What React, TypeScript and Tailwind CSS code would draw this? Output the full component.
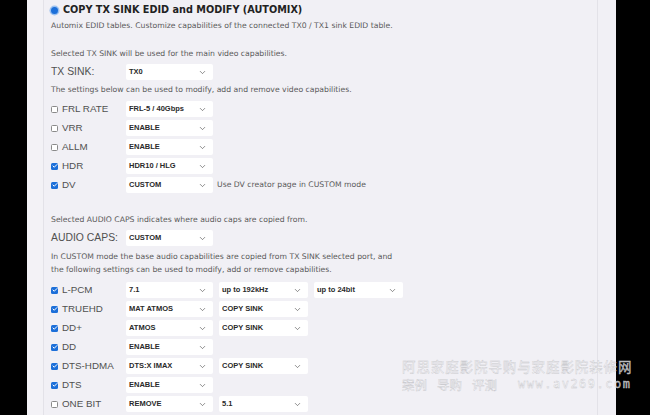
import { ChevronDown, Check } from "lucide-react";

const desc = "text-[7.7px] leading-[12px] text-[#5a5a5a] font-['DejaVu_Sans',sans-serif]";

const Select = ({ value, w = "w-[87px]" }: any) => (
  <div className={`${w} h-[16px] bg-white flex items-center justify-between pl-[3px] pr-[6px] rounded-[2px]`}>
    <span className="text-[7.5px] font-bold text-[#2a2a2a] font-['Liberation_Sans',sans-serif]">{value}</span>
    <ChevronDown size={9} strokeWidth={1.6} className="text-[#444]" />
  </div>
);

const Box = ({ on }: any) =>
  on ? (
    <span className="w-[7px] h-[7px] rounded-[1.5px] bg-[#1c6fd9] flex items-center justify-center">
      <Check size={6} strokeWidth={4} className="text-white" />
    </span>
  ) : (
    <span className="w-[7px] h-[7px] rounded-[1.5px] border border-[#8a8a8a] bg-white" />
  );

const Row = ({ label, on, values, note, big }: any) => (
  <div className="h-[16px] flex items-center">
    <div className="w-[75px] flex items-center gap-[4px]">
      {on !== undefined && <Box on={on} />}
      <span
        className={`${big ? "text-[10.4px]" : "text-[9.8px]"} text-[#505050] font-['Liberation_Sans',sans-serif]`}
      >
        {label}
      </span>
    </div>
    <div className="flex gap-[6px] items-center">
      {values.map((v: string, i: number) => (
        <Select key={i} value={v} w={i === 0 ? "w-[87px]" : "w-[89px]"} />
      ))}
      {note && <span className={`${desc} ml-[-2px]`}>{note}</span>}
    </div>
  </div>
);

export default function App() {
  return (
    <div className="relative w-[650px] h-[415px] overflow-hidden flex bg-black">
      <div className="w-[27px] bg-black" />
      <div className="w-[17px] bg-[#f3f2f6] border-r border-[#e3e2e8]" />
      <div className="w-[553px] bg-[#f1f0f5] pl-[7px] pt-[1px] flex flex-col">
        <div className="h-[19px] flex items-center gap-[5px]">
          <span className="w-[7px] h-[7px] rounded-full bg-[#1c6fd9] ring-[1.5px] ring-[#9cc2f0]" />
          <span className="text-[9.7px] font-bold text-[#222] font-['DejaVu_Sans',sans-serif]">
            COPY TX SINK EDID and MODIFY (AUTOMIX)
          </span>
        </div>
        <p className={desc}>
          Automix EDID tables. Customize capabilities of the connected TX0 / TX1 sink EDID table.
        </p>
        <p className={`${desc} mt-[16px]`}>Selected TX SINK will be used for the main video capabilities.</p>
        <div className="mt-[4px]">
          <Row big label="TX SINK:" values={["TX0"]} />
        </div>
        <p className={`${desc} mt-[4px]`}>The settings below can be used to modify, add and remove video capabilities.</p>
        <div className="mt-[5px] flex flex-col gap-[3px]">
          <Row on={false} label="FRL RATE" values={["FRL-5 / 40Gbps"]} />
          <Row on={false} label="VRR" values={["ENABLE"]} />
          <Row on={false} label="ALLM" values={["ENABLE"]} />
          <Row on={true} label="HDR" values={["HDR10 / HLG"]} />
          <Row on={true} label="DV" values={["CUSTOM"]} note="Use DV creator page in CUSTOM mode" />
        </div>
        <p className={`${desc} mt-[21px]`}>Selected AUDIO CAPS indicates where audio caps are copied from.</p>
        <div className="mt-[4px]">
          <Row big label="AUDIO CAPS:" values={["CUSTOM"]} />
        </div>
        <p className={`${desc} mt-[4px] leading-[13px]`}>
          In CUSTOM mode the base audio capabilities are copied from TX SINK selected port, and
          <br />
          the following settings can be used to modify, add or remove capabilities.
        </p>
        <div className="mt-[6px] flex flex-col gap-[3px]">
          <Row on={true} label="L-PCM" values={["7.1", "up to 192kHz", "up to 24bit"]} />
          <Row on={true} label="TRUEHD" values={["MAT ATMOS", "COPY SINK"]} />
          <Row on={true} label="DD+" values={["ATMOS", "COPY SINK"]} />
          <Row on={true} label="DD" values={["ENABLE"]} />
          <Row on={true} label="DTS-HDMA" values={["DTS:X IMAX", "COPY SINK"]} />
          <Row on={true} label="DTS" values={["ENABLE"]} />
          <Row on={false} label="ONE BIT" values={["REMOVE", "5.1"]} />
        </div>
      </div>
      <div className="w-[19px] bg-[#f1f0f5] border-l border-[#e3e2e8]" />
      <div className="flex-1 bg-black" />
      {/* watermark */}
      <div className="absolute left-[402px] top-[358px] font-['Noto_Sans_CJK_SC',sans-serif] text-[rgba(255,255,255,0.7)] [-webkit-text-stroke:0.35px_#c4c4c9]">
        <div className="text-[13.5px] tracking-[0.9px] leading-[17px]">阿思家庭影院导购与家庭影院装修网</div>
        <div className="mt-[2px] text-[12.5px] leading-[15px] flex items-center gap-[10px]">
          <span>案例</span>
          <span>导购</span>
          <span>评测</span>
          <span className="font-['DejaVu_Sans_Mono',monospace] text-[12px] tracking-[1.5px] ml-[11px]">www.av269.com</span>
        </div>
      </div>
    </div>
  );
}
